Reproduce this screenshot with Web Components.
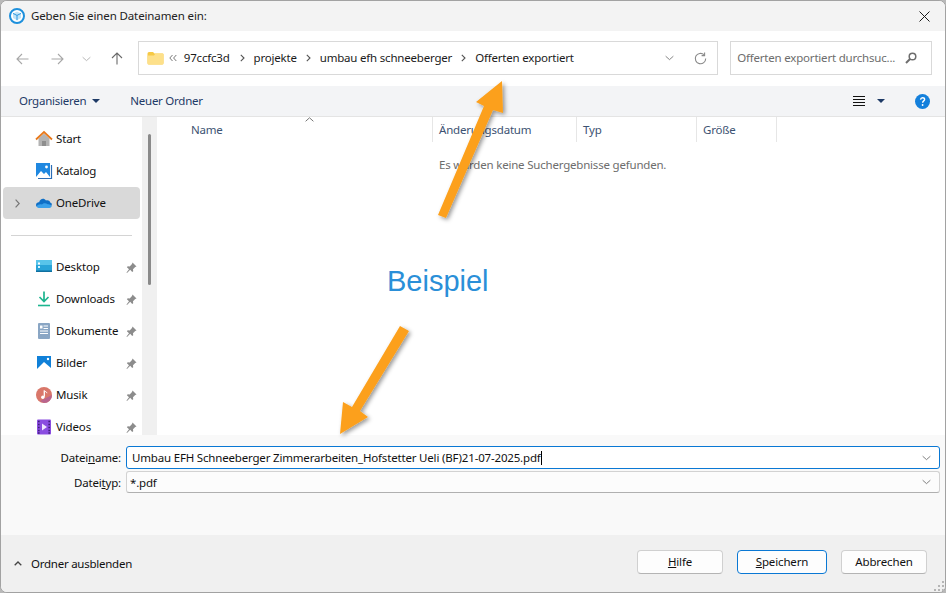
<!DOCTYPE html>
<html lang="de">
<head>
<meta charset="utf-8">
<title>Dateiname</title>
<style>
  html, body { margin: 0; height: 100%; background: #b9b9b9; }
  body { font: 11.5px "Noto Sans", "Open Sans", sans-serif; color: #1a1a1a; overflow: hidden; }
</style>
</head>
<body>
<file-dialog>
  <title-bar>Geben Sie einen Dateinamen ein:</title-bar>
  <nav-band></nav-band>
  <tool-band></tool-band>
  <main-area>
    <nav-pane>
      <nav-item icon="home" name="Start"></nav-item>
      <nav-item icon="catalog" name="Katalog"></nav-item>
      <nav-item icon="cloud" name="OneDrive" selected></nav-item>
      <nav-sep></nav-sep>
      <nav-item icon="desktop" name="Desktop" pinned></nav-item>
      <nav-item icon="download" name="Downloads" pinned></nav-item>
      <nav-item icon="docs" name="Dokumente" pinned></nav-item>
      <nav-item icon="pictures" name="Bilder" pinned></nav-item>
      <nav-item icon="music" name="Musik" pinned></nav-item>
      <nav-item icon="videos" name="Videos" pinned></nav-item>
    </nav-pane>
    <file-list></file-list>
  </main-area>
  <save-form></save-form>
  <dialog-footer></dialog-footer>
  <note-layer></note-layer>
</file-dialog>

<script>
// small helper, every element just writes its html into an open shadow root
class Base extends HTMLElement {
  connectedCallback() {
    if (!this.shadowRoot) this.attachShadow({ mode: 'open' });
    this.shadowRoot.innerHTML = this.render();
  }
}

const ICONS = {
  home: `<path d="M3.500 8.500 9 3.600l5.500 4.900V16h-11z" fill="#b3b3b3"/><path d="M7 16v-5h4v5z" fill="#8e8e8e"/><path d="M1 9.500 9 2l8 7.500" fill="none" stroke="#e8791c" stroke-width="1.800"/>`,
  catalog: `<rect x="1" y="1" width="14" height="14" fill="#1f88e0"/><path d="M1 15l5-6 3 3 2-2 4 5z" fill="#fff"/><circle cx="11.500" cy="5" r="1.400" fill="#fff"/><path d="M16.500 3v13.500H3" fill="none" stroke="#2c6db5" stroke-width="1.200"/>`,
  cloud: `<path d="M1.500 12.500c-1.200-2 .2-4.300 2.600-4.200C5 4.600 9 3.600 11 6.500c2-.6 3.800.3 4.200 2 1.600.2 2.300 2.300 1 3.500z" fill="#0f6fc6"/><path d="M1.500 12.500c.6.700 1.200 1.500 2 1.500h11c1 0 1.700-.8 2.200-1.500-.7-1.700-2.300-2.500-4-2.200-1.800-1.600-4.300-1.500-5.700.2-2.200-.6-4.300 0-5.500 2z" fill="#3aa0ea"/>`,
  desktop: `<rect x="1" y="2" width="16" height="12" rx="1" fill="#29a4d8"/><rect x="1" y="2" width="16" height="5" fill="#58c4ea"/><rect x="3" y="4.500" width="2" height="2" fill="#fff"/><rect x="3" y="8" width="2" height="2" fill="#d8f4ff"/><rect x="1" y="12.500" width="16" height="1.500" fill="#0f6f9f"/>`,
  download: `<path d="M9 1.500v10M4.500 7 9 11.500 13.500 7" fill="none" stroke="#1db58f" stroke-width="1.700"/><path d="M3 15.500h12" stroke="#1db58f" stroke-width="1.600"/>`,
  docs: `<rect x="3" y="1" width="12" height="16" rx="1" fill="#8aa6c4"/><path d="M8.500 4H13M8.500 6.500H13M5 9h8M5 11.500h8" stroke="#fff" stroke-width="1"/><rect x="5" y="3.500" width="2.500" height="3" fill="#fff"/>`,
  pictures: `<rect x="2" y="2" width="14" height="14" fill="#1080d8"/><path d="M2 15l7-7 7 6v2H2z" fill="#fff"/><circle cx="13" cy="5" r="1.200" fill="#fff"/>`,
  music: `<circle cx="9" cy="9" r="8" fill="#d9776a"/><path d="M9 17A8 8 0 0 0 17 9L5 15z" fill="#b9658e"/><path d="M9.300 4.500v6.300" stroke="#fff" stroke-width="1.300"/><path d="M9.300 4.500c1 1.500 2.500 1.200 2.700 2.700" fill="none" stroke="#fff" stroke-width="1"/><circle cx="7.800" cy="11.300" r="1.700" fill="#fff"/>`,
  videos: `<rect x="2" y="1.500" width="14" height="15" rx="1" fill="#8a4de0"/><path d="M7 5.500l5 3.500-5 3.500z" fill="#f0e6ff"/><path d="M3.200 3.500h1.300M3.200 6.500h1.300M3.200 9.500h1.300M3.200 12.500h1.300M3.200 15h1.300M13.500 3.500h1.300M13.500 6.500h1.300M13.500 9.500h1.300M13.500 12.500h1.300M13.500 15h1.300" stroke="#2d1460" stroke-width="1.300"/>`
};

const chevDown = c => `<svg width="11" height="6" viewBox="0 0 11 6"><path d="M.8.800 5.500 5 10.200.8" fill="none" stroke="${c}" stroke-width="1"/></svg>`;

class FileDialog extends Base {
  render() {
    return `<style>
      :host { display: flex; flex-direction: column; position: relative; box-sizing: border-box; width: 946px; height: 593px;
        border: 1px solid #a2a2a2; border-radius: 7px; overflow: hidden; background: #fff; }
    </style><slot></slot>`;
  }
}

class TitleBar extends Base {
  render() {
    return `<style>
      :host { display: flex; align-items: center; height: 30px; flex: none; background: #f3f3f3; padding: 0 8px; letter-spacing: -.12px; }
      .txt { margin: 0 0 2px 6px; flex: 1; color: #222; }
      svg { display: block; }
    </style>
    <svg width="16" height="16" viewBox="0 0 16 16"><circle cx="8" cy="8" r="7" fill="#fff" stroke="#1e90dc" stroke-width="2"/>
      <path d="M8 3.600 12 5.400V10l-4 2.200L4 10V5.400z" fill="#bfe3f7"/><path d="M4 5.400l4 2 4-2M8 7.400v4.800" fill="none" stroke="#1e90dc" stroke-width=".9"/></svg>
    <span class="txt"><slot></slot></span>
    <svg style="margin-right:7px" width="11" height="11" viewBox="0 0 11 11"><path d="M.5.500l10 10M10.500.500l-10 10" stroke="#1a1a1a" stroke-width="1"/></svg>`;
  }
}

class NavBand extends Base {
  render() {
    const sep = `<svg class="sep" width="5" height="8" viewBox="0 0 5 8"><path d="M.8.800 4 4 .8 7.200" fill="none" stroke="#555" stroke-width="1.100"/></svg>`;
    return `<style>
      :host { display: flex; align-items: center; height: 55px; flex: none; background: #fff; padding: 0 13px 0 15px; box-sizing: border-box; letter-spacing: -.2px; }
      svg { display: block; flex: none; }
      .arrows { display: flex; align-items: center; width: 122px; }
      .addr, .search { display: flex; align-items: center; height: 34px; box-sizing: border-box; border: 1px solid #d9d9d9; margin-top: -1px; }
      .addr { width: 581px; padding: 0 10px 0 8px; }
      .crumb { color: #1b1b1b; margin: 0 9px 2px 9px; white-space: nowrap; }
      .grow { flex: 1; }
      .search { width: 202px; margin-left: 12px; padding: 0 14px 0 6px; color: #6d6d6d; justify-content: space-between; }
      .search span { margin-bottom: 2px; }
    </style>
    <div class="arrows">
      <svg width="13" height="12" viewBox="0 0 13 12"><path d="M12.500 6H1M6 1 1 6l5 5" fill="none" stroke="#a8a8a8" stroke-width="1.100"/></svg>
      <svg style="margin-left:22px" width="13" height="12" viewBox="0 0 13 12"><path d="M.5 6H12M7 1l5 5-5 5" fill="none" stroke="#a8a8a8" stroke-width="1.100"/></svg>
      <span style="margin-left:18px;width:10px">${chevDown('#a8a8a8').replace('width="11"','width="9"')}</span>
      <svg style="margin-left:19px" width="12" height="13" viewBox="0 0 12 13"><path d="M6 12.500V1M1 6l5-5 5 5" fill="none" stroke="#6a6a6a" stroke-width="1.100"/></svg>
    </div>
    <div class="addr">
      <svg width="17" height="14" viewBox="0 0 17 14"><path d="M.5 2.500q0-1.500 1.500-1.500h4l1.500 1.500H15.500q1 0 1 1V12q0 1.500-1.500 1.500H2Q.5 13.500.5 12z" fill="#f6c945"/><path d="M.5 4.500h6.500l1.500-2H15.500q1 0 1 1V12q0 1.500-1.500 1.500H2Q.5 13.500.5 12z" fill="#fde08a"/></svg>
      <svg style="margin:0 0 0 5px" width="8" height="8" viewBox="0 0 8 8"><path d="M3.500 1 .8 4l2.700 3M7.300 1 4.600 4l2.700 3" fill="none" stroke="#777" stroke-width="1"/></svg>
      <span class="crumb" style="margin:0 10px 2px 7px">97ccfc3d</span>${sep}
      <span class="crumb">projekte</span>${sep}
      <span class="crumb">umbau efh schneeberger</span>${sep}
      <span class="crumb">Offerten exportiert</span>
      <span class="grow"></span>
      ${chevDown('#6a6a6a').replace('width="11"','width="9"')}
      <svg style="margin-left:20px" width="13" height="13" viewBox="0 0 13 13"><path d="M11.700 6.500a5.200 5.200 0 1 1-1.700-3.800" fill="none" stroke="#8a8a8a" stroke-width="1.100"/><path d="M10.600.6v3H7.600" fill="none" stroke="#8a8a8a" stroke-width="1.100"/></svg>
    </div>
    <div class="search"><span>Offerten exportiert durchsuc...</span>
      <svg width="12" height="12" viewBox="0 0 12 12"><circle cx="7.500" cy="4.500" r="3.300" fill="none" stroke="#6e6e6e" stroke-width="1.500"/><path d="M5 7 1 11" stroke="#6e6e6e" stroke-width="2"/></svg>
    </div>`;
  }
}

class ToolBand extends Base {
  render() {
    return `<style>
      :host { display: flex; align-items: center; height: 31px; flex: none; box-sizing: border-box; background: #f3f4f6; border-bottom: 1px solid #e4e4e4; padding: 0 15px 0 18px; color: #1e3a66; letter-spacing: -.25px; }
      svg { display: block; flex: none; }
      span { margin-bottom: 2px; }
      .caret { margin-left: 6px; }
      .grow { flex: 1; }
    </style>
    <span>Organisieren</span>
    <svg class="caret" width="8" height="4" viewBox="0 0 8 4"><path d="M0 0h8L4 4z" fill="#1e3a66"/></svg>
    <span style="margin-left:30px">Neuer Ordner</span>
    <span class="grow"></span>
    <svg width="12" height="10" viewBox="0 0 12 10"><path d="M0 .5h12M0 3.500h12M0 6.500h12M0 9.500h12" stroke="#111" stroke-width="1"/></svg>
    <svg style="margin-left:12px" width="8" height="4" viewBox="0 0 8 4"><path d="M0 0h8L4 4z" fill="#1e3a66"/></svg>
    <svg style="margin-left:30px" width="15" height="15" viewBox="0 0 15 15"><circle cx="7.500" cy="7.500" r="7.500" fill="#1480dc"/><path d="M5.500 5.700q.3-2 2.100-2 2 0 2 1.700c0 1.500-2 1.500-2 3.300" fill="none" stroke="#fff" stroke-width="1.400"/><circle cx="7.600" cy="11" r=".9" fill="#fff"/></svg>`;
  }
}

class MainArea extends Base {
  render() {
    return `<style>:host { display: flex; flex: none; height: 318px; overflow: hidden; background: #fff; }</style><slot></slot>`;
  }
}

class NavPane extends Base {
  render() {
    return `<style>
      :host { display: flex; flex: none; width: 156px; overflow: hidden; }
      .list { width: 141px; flex: none; box-sizing: border-box; padding: 6px 2px 0 2px; }
      .track { width: 15px; background: #f0f0f0; flex: none; display: flex; justify-content: center; padding-top: 17px; box-sizing: border-box; }
      .thumb { width: 3px; height: 151px; background: #8a8a8a; border-radius: 2px; }
    </style>
    <div class="list"><slot></slot></div>
    <div class="track"><div class="thumb"></div></div>`;
  }
}

class NavItem extends Base {
  render() {
    const sel = this.hasAttribute('selected');
    const pin = this.hasAttribute('pinned');
    return `<style>
      :host { display: flex; align-items: center; height: 32px; box-sizing: border-box; border-radius: 4px; position: relative; padding-left: 32px;
        background: ${sel ? '#d9d9d9' : 'transparent'}; letter-spacing: -.15px; color: #111; }
      .ic { display: block; flex: none; }
      .name { margin: 0 0 2px 3px; flex: 1; white-space: nowrap; }
      .pin { display: block; margin-right: 3px; }
      .chev { position: absolute; left: 12px; top: 12px; display: block; }
    </style>
    ${sel ? `<svg class="chev" width="5" height="9" viewBox="0 0 5 9"><path d="M.6.700 4.200 4.500.6 8.300" fill="none" stroke="#777" stroke-width="1.200"/></svg>` : ''}
    <svg class="ic" width="18" height="18" viewBox="0 0 18 18">${ICONS[this.getAttribute('icon')] || ''}</svg>
    <span class="name">${this.getAttribute('name')}</span>
    ${pin ? `<svg class="pin" width="11" height="11" viewBox="0 0 11 11"><path d="M6.500.5l4 4-1.300.5L7 7.200l.2 2-1 .8-2-2.200L1 11l-.5-.5L3 7.200.9 5.200l.8-1 2 .2L6 2z" fill="#8c8c8c"/></svg>` : ''}`;
  }
}

class NavSep extends Base {
  render() {
    return `<style>:host { display: block; height: 32px; padding: 16px 8px 0 8px; box-sizing: border-box; } div { height: 1px; background: #d4d4d4; }</style><div></div>`;
  }
}

class FileList extends Base {
  render() {
    const col = (w, t) => `<div class="col" style="width:${w}px">${t}</div>`;
    return `<style>
      :host { display: block; flex: 1; position: relative; letter-spacing: -.2px; }
      .head { display: flex; height: 25px; align-items: center; padding-left: 27px; color: #3c5272; position: relative; }
      .col { box-sizing: border-box; padding-left: 6px; height: 100%; line-height: 25px; border-right: 1px solid #e6e6e6; white-space: nowrap; }
      .col:first-of-type { padding-left: 7px; }
      .sort { position: absolute; left: 148px; top: 0; display: block; }
      .msg { color: #6d6d6d; padding: 15px 0 0 282px; }
    </style>
    <div class="head">
      <svg class="sort" width="9" height="5" viewBox="0 0 9 5"><path d="M.6 4.300 4.500.8l3.900 3.500" fill="none" stroke="#777" stroke-width="1"/></svg>
      ${col(249, 'Name')}${col(144, 'Änderungsdatum')}${col(120, 'Typ')}${col(80, 'Größe')}
    </div>
    <div class="msg">Es wurden keine Suchergebnisse gefunden.</div>`;
  }
}

class ComboField extends Base {
  render() {
    const focus = this.hasAttribute('focus');
    return `<style>
      :host { display: grid; grid-template-columns: 120px 814px; height: ${focus ? 23 : 22}px; align-items: center; letter-spacing: -.18px; }
      .lab { text-align: right; padding-right: 5px; color: #111; }
      u { text-decoration-thickness: 1px; text-underline-offset: 1px; }
      .box { display: flex; align-items: center; height: 100%; box-sizing: border-box; border-radius: 3px; background: ${focus ? '#fff' : '#fcfcfc'};
        border: 1px solid ${focus ? '#0a78d4' : '#d2d2d2'}; border-bottom-color: ${focus ? '#0a78d4' : '#b0b0b0'}; padding: 0 8px 0 ${focus ? 5 : 3}px; }
      .val { flex: 1; white-space: nowrap; color: #111; }
      .caret { display: inline-block; width: 1px; height: 14px; background: #000; vertical-align: -3px; }
    </style>
    <span class="lab">${this.getAttribute('label')}</span>
    <div class="box"><span class="val">${this.getAttribute('value')}${focus ? '<span class="caret"></span>' : ''}</span>${chevDown('#666').replace('width="11"','width="9"')}</div>`;
  }
}

class SaveForm extends Base {
  render() {
    return `<style>
      :host { display: flex; flex-direction: column; gap: 2px; height: 100px; flex: none; box-sizing: border-box; background: #f9f9f9; padding: 11px 5px 0 5px; }
    </style>
    <combo-field focus label="Datei<u>n</u>ame:" value="Umbau EFH Schneeberger Zimmerarbeiten_Hofstetter Ueli (BF)21-07-2025.pdf"></combo-field>
    <combo-field label="Datei<u>t</u>yp:" value="*.pdf"></combo-field>`;
  }
}

class DlgButton extends Base {
  render() {
    const d = this.hasAttribute('default');
    return `<style>
      :host { display: flex; align-items: center; justify-content: center; height: 24px; box-sizing: border-box; border-radius: 4px; background: #fdfdfd; color: #111;
        border: 1px solid ${d ? '#0a78d4' : '#d0d0d0'}; ${d ? '' : 'border-bottom-color:#b4b4b4;'} width: ${this.getAttribute('w')}px; letter-spacing: -.15px; }
      ::slotted(u) { text-decoration-thickness: 1px; text-underline-offset: 1px; }
    </style><span><slot></slot></span>`;
  }
}

class DialogFooter extends Base {
  render() {
    return `<style>
      :host { display: flex; align-items: center; flex: 1; min-height: 0; background: #f0f0f0; padding: 0 18px 4px 13px; gap: 14px; position: relative; letter-spacing: -.25px; }
      .hide { display: flex; align-items: center; gap: 9px; flex: 1; color: #111; margin-top: 4px; }
      svg { display: block; }
      .grip { position: absolute; right: 1px; bottom: 1px; }
    </style>
    <div class="hide"><svg width="8" height="5" viewBox="0 0 8 5"><path d="M.7 4.300 4 1l3.300 3.300" fill="none" stroke="#444" stroke-width="1.300"/></svg>Ordner ausblenden</div>
    <dlg-button w="86"><u>H</u>ilfe</dlg-button>
    <dlg-button w="90" default><u>S</u>peichern</dlg-button>
    <dlg-button w="86">Abbrechen</dlg-button>
    <svg class="grip" width="10" height="10" viewBox="0 0 10 10" fill="#b5b5b5"><rect x="8" y="0" width="2" height="2"/><rect x="4" y="4" width="2" height="2"/><rect x="8" y="4" width="2" height="2"/><rect x="0" y="8" width="2" height="2"/><rect x="4" y="8" width="2" height="2"/><rect x="8" y="8" width="2" height="2"/></svg>`;
  }
}

// annotation drawn over the screenshot: two arrows and the word Beispiel
class NoteLayer extends Base {
  render() {
    return `<style>
      :host { position: absolute; left: -1px; top: -1px; width: 946px; height: 593px; pointer-events: none; }
      svg { position: absolute; left: 0; top: 0; }
      .word { position: absolute; left: 387px; top: 265px; font: 29px/33px "Liberation Sans", Arial, sans-serif; color: #2a8fd8; }
    </style>
    <svg width="946" height="593" viewBox="0 0 946 593">
      <defs><filter id="sh" x="-30%" y="-30%" width="160%" height="160%"><feDropShadow dx="2" dy="2" stdDeviation="2" flood-color="#000" flood-opacity=".4"/></filter></defs>
      <g fill="#fca01c" filter="url(#sh)">
        <polygon points="502,81 476,102 484,106 438,215 446,218 493,110 503,113"/>
        <polygon points="400,326 409,331 360,411 368,417 340,434 343,402 352,407"/>
      </g>
    </svg>
    <div class="word">Beispiel</div>`;
  }
}

customElements.define('file-dialog', FileDialog);
customElements.define('title-bar', TitleBar);
customElements.define('nav-band', NavBand);
customElements.define('tool-band', ToolBand);
customElements.define('main-area', MainArea);
customElements.define('nav-pane', NavPane);
customElements.define('nav-item', NavItem);
customElements.define('nav-sep', NavSep);
customElements.define('file-list', FileList);
customElements.define('combo-field', ComboField);
customElements.define('save-form', SaveForm);
customElements.define('dlg-button', DlgButton);
customElements.define('dialog-footer', DialogFooter);
customElements.define('note-layer', NoteLayer);
</script>
</body>
</html>
